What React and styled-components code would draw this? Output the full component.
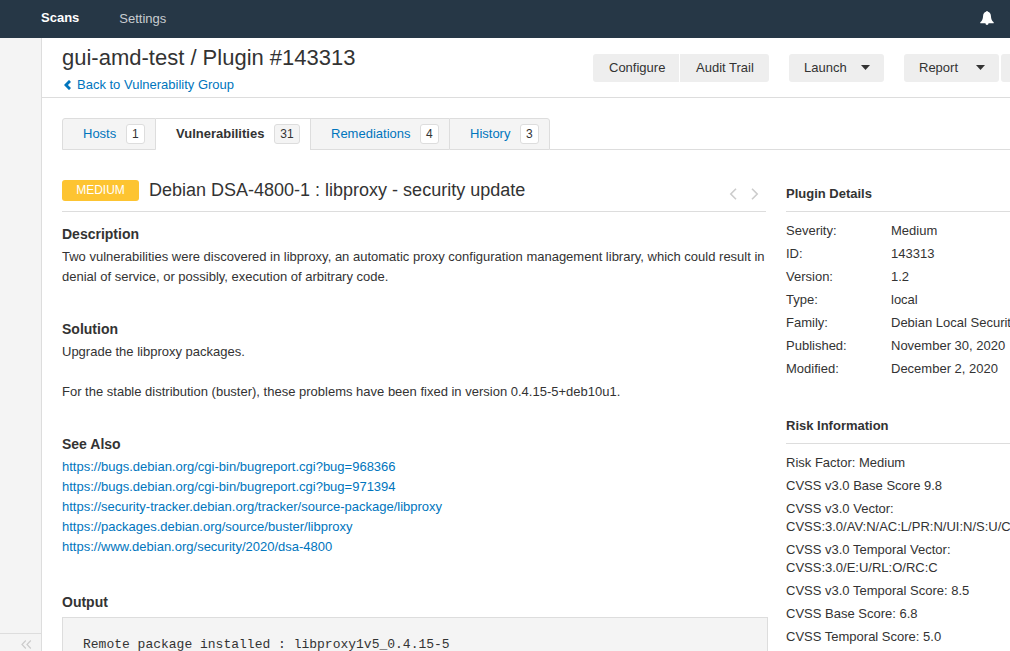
import React from "react";
import styled, { createGlobalStyle } from "styled-components";

const Global = createGlobalStyle`
  * { box-sizing: border-box; }
  html, body { margin: 0; padding: 0; overflow: hidden; background: #fff; }
  body { font: 13px/20px "Liberation Sans", Arial, sans-serif; color: #333; }
  a { color: #0075bd; text-decoration: none; }
  h1, h2, h3, h4, p, pre, ul, dl, dd { margin: 0; padding: 0; }
`;

const Page = styled.div`
  display: flex;
  flex-direction: column;
  height: 651px;
  width: 100%;
  overflow: hidden;
`;

const TopBar = styled.header`
  flex: none;
  display: flex;
  align-items: flex-start;
  height: 38px;
  padding: 8px 16px 0 41px;
  background: #263746;
`;

const NavLink = styled.a`
  margin-right: 40px;
  padding-top: ${(p) => (p.$active ? 0 : 1)}px;
  font-weight: ${(p) => (p.$active ? "bold" : "normal")};
  && { color: ${(p) => (p.$active ? "#fff" : "#c8cdd1")}; }
`;

const Bell = styled.svg`
  display: block;
  width: 14px;
  height: 14px;
  margin: 3px 0 0 auto;
`;

const Body = styled.div`
  flex: 1;
  display: flex;
  min-height: 0;
`;

const Sidebar = styled.aside`
  flex: none;
  display: flex;
  flex-direction: column;
  justify-content: flex-end;
  width: 42px;
  background: #f4f4f4;
  border-right: 1px solid #ddd;
`;

const Collapse = styled.div`
  height: 18px;
  border-top: 1px solid #ddd;
  padding: 6px 0 0 21px;
  svg { display: block; }
`;

const Main = styled.main`
  flex: 1;
  min-width: 0;
  overflow: hidden;
`;

const PageHeader = styled.div`
  display: flex;
  height: 60px;
  padding-left: 20px;
  border-bottom: 1px solid #ddd;
`;

const Heading = styled.div`
  flex: none;
  width: 531px;
  padding-top: 7px;
`;

const PageTitle = styled.h1`
  font-size: 22px;
  line-height: 26px;
  font-weight: normal;
`;

const BackLink = styled.a`
  display: flex;
  align-items: center;
  gap: 5px;
  margin-top: 4px;
  padding-left: 2px;
`;

const ButtonGroup = styled.div`
  flex: none;
  display: flex;
  gap: ${(p) => p.$gap || 1}px;
  margin: 16px 20px 0 0;
`;

const Button = styled.button`
  flex: none;
  display: flex;
  align-items: center;
  justify-content: space-between;
  width: ${(p) => p.$width}px;
  height: 28px;
  padding: 0 ${(p) => (p.$menu ? 14 : 15)}px 0 ${(p) => (p.$menu ? 15 : 16)}px;
  border: 0;
  border-radius: ${(p) => p.$radius || "3px"};
  background: #eee;
  color: #333;
  font: inherit;
  white-space: nowrap;
`;

const Caret = styled.svg`
  display: block;
  width: 9px;
  height: 5px;
  margin-bottom: 1px;
`;

const Tabs = styled.nav`
  display: flex;
  height: 32px;
  margin: 20px 0 0 20px;
`;

const Tab = styled.a`
  flex: none;
  display: flex;
  align-items: center;
  justify-content: space-between;
  width: ${(p) => p.$width}px;
  padding: 0 10px 0 20px;
  border: solid #ddd;
  border-width: ${(p) => (p.$active ? "1px 0" : p.$ends === "both" ? "1px" : "1px 0 1px 1px")};
  border-bottom-color: ${(p) => (p.$active ? "#fff" : "#ddd")};
  border-radius: ${(p) => p.$radius || 0};
  background: ${(p) => (p.$active ? "#fff" : "#f4f4f4")};
  font-weight: ${(p) => (p.$active ? "bold" : "normal")};
  && { color: ${(p) => (p.$active ? "#333" : "#0075bd")}; }
`;

const Count = styled.span`
  height: 20px;
  padding: 0 5.3px;
  border: 1px solid #ddd;
  border-radius: 3px;
  background: ${(p) => (p.$active ? "#f4f4f4" : "#fff")};
  color: #333;
  font-size: 12px;
  font-weight: normal;
  line-height: 18px;
`;

const TabRule = styled.div`
  flex: 1;
  border-bottom: 1px solid #ddd;
`;

const Columns = styled.div`
  display: flex;
  padding-left: 20px;
`;

const Content = styled.section`
  flex: none;
  width: 706px;
  margin-right: 18px;
  padding-top: 26px;
`;

const PluginTitle = styled.div`
  display: flex;
  align-items: flex-start;
  width: 704px;
  height: 36px;
  padding-top: 4px;
  border-bottom: 1px solid #ddd;
  h2 { font-size: 18px; line-height: 20px; font-weight: normal; margin-left: 10px; }
`;

const Severity = styled.span`
  width: 77px;
  height: 21px;
  border-radius: 3px;
  background: #fdc431;
  color: #fff;
  font-size: 12px;
  line-height: 20px;
  text-align: center;
`;

const Pager = styled.div`
  display: flex;
  gap: 14px;
  margin: 8px 7px 0 auto;
`;

const Section = styled.section`
  padding-top: ${(p) => p.$top}px;
  h3 { font-size: 14px; line-height: 20px; margin-bottom: 3px; }
  p { white-space: pre-line; }
`;

const References = styled.ul`
  list-style: none;
`;

const Output = styled.pre`
  height: 80px;
  margin-top: 5px;
  padding: 17px 20px;
  border: 1px solid #ddd;
  background: #f4f4f4;
  font: 13px/20px "Liberation Mono", "Courier New", monospace;
`;

const Details = styled.aside`
  flex: none;
  width: 290px;
  padding-top: 34px;
`;

const DetailTitle = styled.h4`
  height: 28px;
  margin-bottom: 10px;
  border-bottom: 1px solid #ddd;
  font-size: 13px;
  line-height: 20px;
`;

const DetailBlock = styled.div`
  margin-bottom: 38px;
`;

const DetailRow = styled.div`
  display: flex;
  margin-bottom: 5px;
  line-height: 18px;
  white-space: pre;
  span:first-child:not(:last-child) { flex: none; width: 105px; }
`;

const Chevron = ({ dir }) => (
  <svg width="8" height="12" viewBox="0 0 8 12" fill="none" stroke="#ccc" strokeWidth="1.6">
    <path d={dir === "left" ? "M7 .8 1.8 6 7 11.2" : "M1 .8 6.2 6 1 11.2"} />
  </svg>
);

const Down = () => (
  <Caret viewBox="0 0 9 5" fill="#333">
    <path d="M0 0h9L4.500 5z" />
  </Caret>
);

const tabs = [
  { label: "Hosts", count: 1, width: 94, ends: "both", radius: "3px 0 0 0" },
  { label: "Vulnerabilities", count: 31, width: 154, active: true },
  { label: "Remediations", count: 4, width: 139 },
  { label: "History", count: 3, width: 101, ends: "both", radius: "0 3px 0 0" },
];

const links = [
  "https://bugs.debian.org/cgi-bin/bugreport.cgi?bug=968366",
  "https://bugs.debian.org/cgi-bin/bugreport.cgi?bug=971394",
  "https://security-tracker.debian.org/tracker/source-package/libproxy",
  "https://packages.debian.org/source/buster/libproxy",
  "https://www.debian.org/security/2020/dsa-4800",
];

const details = [
  ["Severity:", "Medium"],
  ["ID:", "143313"],
  ["Version:", "1.2"],
  ["Type:", "local"],
  ["Family:", "Debian Local Security Checks"],
  ["Published:", "November 30, 2020"],
  ["Modified:", "December 2, 2020"],
];

const risks = [
  "Risk Factor: Medium",
  "CVSS v3.0 Base Score 9.8",
  "CVSS v3.0 Vector:\nCVSS:3.0/AV:N/AC:L/PR:N/UI:N/S:U/C:H/I:H/A:H",
  "CVSS v3.0 Temporal Vector:\nCVSS:3.0/E:U/RL:O/RC:C",
  "CVSS v3.0 Temporal Score: 8.5",
  "CVSS Base Score: 6.8",
  "CVSS Temporal Score: 5.0",
];

export default function App() {
  return (
    <Page>
      <Global />
      <TopBar>
        <NavLink $active>Scans</NavLink>
        <NavLink>Settings</NavLink>
        <Bell viewBox="0 0 14 14" fill="#fff">
          <path d="M7 0c.5 0 .9.300 1 .8C9.800 1.300 10.700 2.700 10.900 4.700c.3 3.300.6 4.800 2.800 6.600v1H.3v-1C2.500 9.500 2.800 8 3.100 4.700 3.300 2.700 4.200 1.300 6 .8 6.100.3 6.500 0 7 0zM5.500 12.300h3c0 1-.6 1.600-1.500 1.600s-1.500-.6-1.500-1.600z" />
        </Bell>
      </TopBar>
      <Body>
        <Sidebar>
          <Collapse>
            <svg width="11" height="9" viewBox="0 0 11 9" fill="none" stroke="#ccc" strokeWidth="1.2">
              <path d="M4.800.5 1 4.500l3.800 4M9.800.5 6 4.500l3.800 4" />
            </svg>
          </Collapse>
        </Sidebar>
        <Main>
          <PageHeader>
            <Heading>
              <PageTitle>gui-amd-test / Plugin #143313</PageTitle>
              <BackLink>
                <svg width="8" height="10" viewBox="0 0 8 10" fill="none" stroke="#0075bd" strokeWidth="2.8">
                  <path d="M6 .9 1.900 5 6 9.100" />
                </svg>
                Back to Vulnerability Group
              </BackLink>
            </Heading>
            <ButtonGroup>
              <Button $width={86} $radius="3px 0 0 3px">Configure</Button>
              <Button $width={89} $radius="0 3px 3px 0">Audit Trail</Button>
            </ButtonGroup>
            <ButtonGroup>
              <Button $width={95} $menu>Launch<Down /></Button>
            </ButtonGroup>
            <ButtonGroup $gap={2}>
              <Button $width={95} $menu>Report<Down /></Button>
              <Button $width={95} $menu />
            </ButtonGroup>
          </PageHeader>
          <Tabs>
            {tabs.map((t) => (
              <Tab key={t.label} $width={t.width} $active={t.active} $ends={t.ends} $radius={t.radius}>
                {t.label}
                <Count $active={t.active}>{t.count}</Count>
              </Tab>
            ))}
            <TabRule />
          </Tabs>
          <Columns>
            <Content>
              <PluginTitle>
                <Severity>MEDIUM</Severity>
                <h2>Debian DSA-4800-1 : libproxy - security update</h2>
                <Pager>
                  <Chevron dir="left" />
                  <Chevron dir="right" />
                </Pager>
              </PluginTitle>
              <Section $top={12}>
                <h3>Description</h3>
                <p>Two vulnerabilities were discovered in libproxy, an automatic proxy configuration management library, which could result in denial of service, or possibly, execution of arbitrary code.</p>
              </Section>
              <Section $top={32}>
                <h3>Solution</h3>
                <p>{"Upgrade the libproxy packages.\n\nFor the stable distribution (buster), these problems have been fixed in version 0.4.15-5+deb10u1."}</p>
              </Section>
              <Section $top={32}>
                <h3>See Also</h3>
                <References>
                  {links.map((l) => <li key={l}><a>{l}</a></li>)}
                </References>
              </Section>
              <Section $top={35}>
                <h3>Output</h3>
                <Output>Remote package installed : libproxy1v5_0.4.15-5</Output>
              </Section>
            </Content>
            <Details>
              <DetailBlock>
                <DetailTitle>Plugin Details</DetailTitle>
                {details.map(([k, v]) => (
                  <DetailRow key={k}><span>{k}</span><span>{v}</span></DetailRow>
                ))}
              </DetailBlock>
              <DetailBlock>
                <DetailTitle>Risk Information</DetailTitle>
                {risks.map((r) => <DetailRow key={r}><span>{r}</span></DetailRow>)}
              </DetailBlock>
            </Details>
          </Columns>
        </Main>
      </Body>
    </Page>
  );
}
